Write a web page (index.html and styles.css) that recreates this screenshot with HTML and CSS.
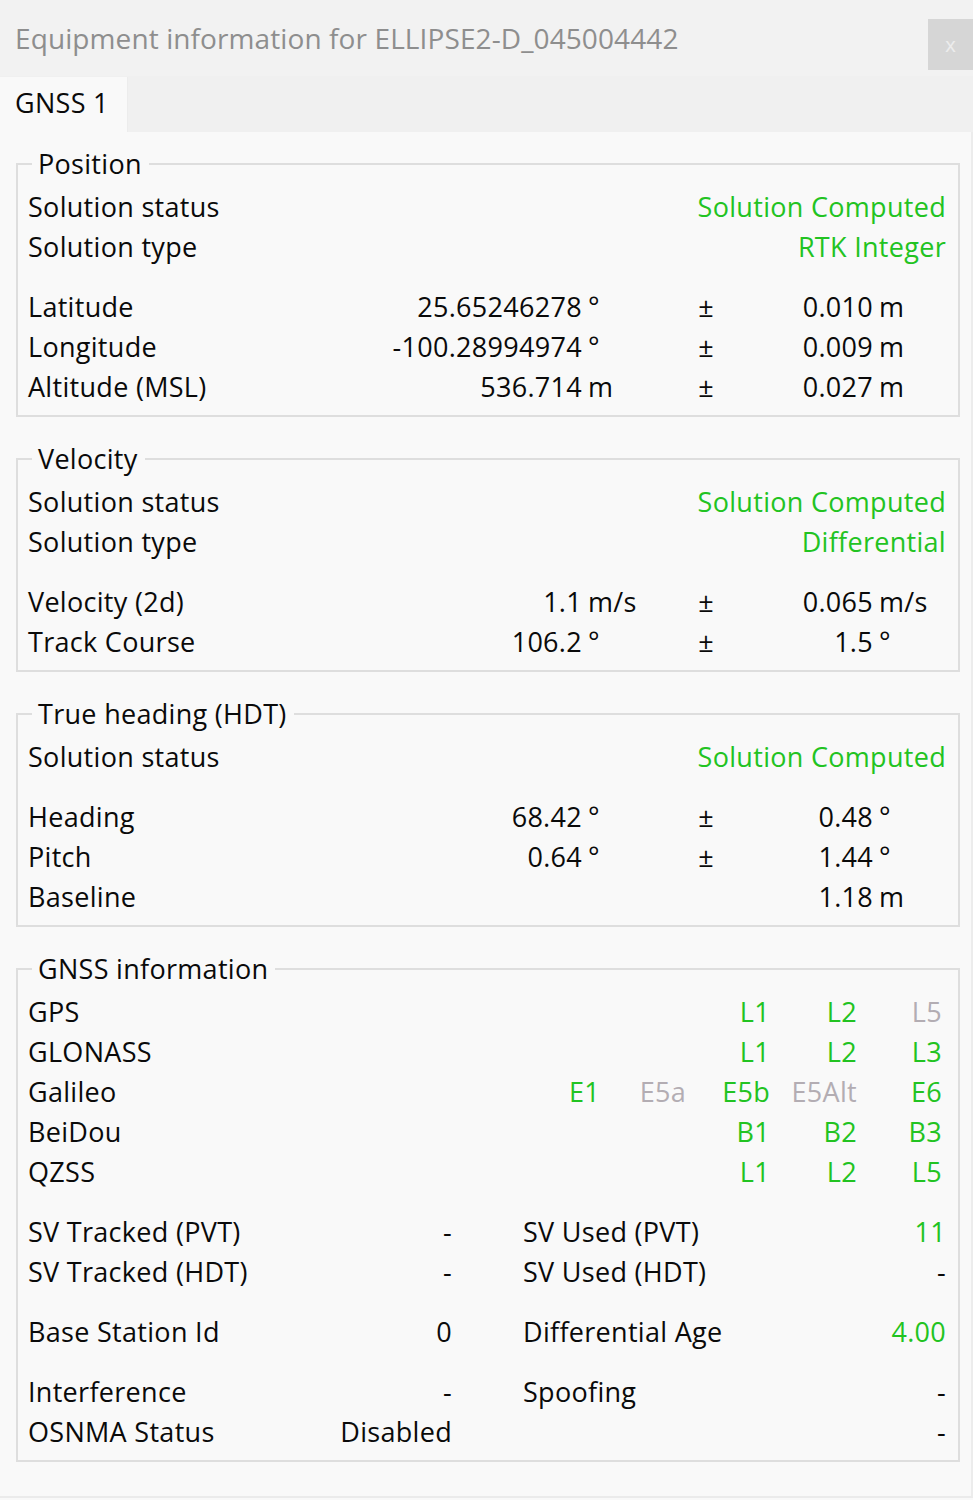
FILE: index.html
```html
<!DOCTYPE html>
<html lang="en">
<head>
<meta charset="utf-8">
<title>Equipment information</title>
<link rel="stylesheet" href="styles.css">
</head>
<body>
<div class="window">
  <header class="titlebar">
    <div class="title">Equipment information for ELLIPSE2-D_045004442</div>
    <button class="close" type="button">x</button>
  </header>
  <nav class="tabs">
    <div class="tab active">GNSS 1</div>
  </nav>
  <main class="panel">
    <fieldset class="group">
      <legend>Position</legend>
      <div class="grid meas">
        <div class="lbl">Solution status</div><div class="status ok">Solution Computed</div>
        <div class="lbl">Solution type</div><div class="status ok">RTK Integer</div>
        <div class="spacer"></div>
        <div class="lbl">Latitude</div><div class="num">25.65246278</div><div class="unit">°</div><div class="pm">±</div><div class="num">0.010</div><div class="unit">m</div>
        <div class="lbl">Longitude</div><div class="num">-100.28994974</div><div class="unit">°</div><div class="pm">±</div><div class="num">0.009</div><div class="unit">m</div>
        <div class="lbl">Altitude (MSL)</div><div class="num">536.714</div><div class="unit">m</div><div class="pm">±</div><div class="num">0.027</div><div class="unit">m</div>
      </div>
    </fieldset>

    <fieldset class="group">
      <legend>Velocity</legend>
      <div class="grid meas">
        <div class="lbl">Solution status</div><div class="status ok">Solution Computed</div>
        <div class="lbl">Solution type</div><div class="status ok">Differential</div>
        <div class="spacer"></div>
        <div class="lbl">Velocity (2d)</div><div class="num">1.1</div><div class="unit">m/s</div><div class="pm">±</div><div class="num">0.065</div><div class="unit">m/s</div>
        <div class="lbl">Track Course</div><div class="num">106.2</div><div class="unit">°</div><div class="pm">±</div><div class="num">1.5</div><div class="unit">°</div>
      </div>
    </fieldset>

    <fieldset class="group">
      <legend>True heading (HDT)</legend>
      <div class="grid meas">
        <div class="lbl">Solution status</div><div class="status ok">Solution Computed</div>
        <div class="spacer"></div>
        <div class="lbl">Heading</div><div class="num">68.42</div><div class="unit">°</div><div class="pm">±</div><div class="num">0.48</div><div class="unit">°</div>
        <div class="lbl">Pitch</div><div class="num">0.64</div><div class="unit">°</div><div class="pm">±</div><div class="num">1.44</div><div class="unit">°</div>
        <div class="lbl">Baseline</div><div></div><div></div><div></div><div class="num">1.18</div><div class="unit">m</div>
      </div>
    </fieldset>

    <fieldset class="group">
      <legend>GNSS information</legend>
      <div class="grid signals">
        <div class="lbl">GPS</div><div></div><div></div><div class="sig ok">L1</div><div class="sig ok">L2</div><div class="sig off">L5</div>
        <div class="lbl">GLONASS</div><div></div><div></div><div class="sig ok">L1</div><div class="sig ok">L2</div><div class="sig ok">L3</div>
        <div class="lbl">Galileo</div><div class="sig ok">E1</div><div class="sig off">E5a</div><div class="sig ok">E5b</div><div class="sig off">E5Alt</div><div class="sig ok">E6</div>
        <div class="lbl">BeiDou</div><div></div><div></div><div class="sig ok">B1</div><div class="sig ok">B2</div><div class="sig ok">B3</div>
        <div class="lbl">QZSS</div><div></div><div></div><div class="sig ok">L1</div><div class="sig ok">L2</div><div class="sig ok">L5</div>
      </div>
      <div class="grid stats">
        <div class="lbl">SV Tracked (PVT)</div><div class="val">-</div><div></div><div class="lbl">SV Used (PVT)</div><div class="val ok">11</div>
        <div class="lbl">SV Tracked (HDT)</div><div class="val">-</div><div></div><div class="lbl">SV Used (HDT)</div><div class="val">-</div>
        <div class="spacer"></div>
        <div class="lbl">Base Station Id</div><div class="val">0</div><div></div><div class="lbl">Differential Age</div><div class="val ok">4.00</div>
        <div class="spacer"></div>
        <div class="lbl">Interference</div><div class="val">-</div><div></div><div class="lbl">Spoofing</div><div class="val">-</div>
        <div class="lbl">OSNMA Status</div><div class="val">Disabled</div><div></div><div class="lbl"></div><div class="val">-</div>
      </div>
    </fieldset>
  </main>
</div>
</body>
</html>
```

FILE: styles.css
```css
* { box-sizing: border-box; }

html, body {
  margin: 0;
  padding: 0;
  background: #f9f9f9;
}

body {
  font-family: "Open Sans", "Noto Sans", sans-serif;
  font-size: 27px;
  letter-spacing: 0.3px;
  color: #0a0a0a;
  width: 973px;
  height: 1500px;
  overflow: hidden;
}

.window {
  display: flex;
  flex-direction: column;
  height: 1500px;
}

.titlebar {
  flex: 0 0 76px;
  background: #f2f2f2;
  display: flex;
  align-items: flex-start;
  justify-content: space-between;
}

.title {
  padding: 16px 0 0 15px;
  font-size: 28px;
  line-height: 44px;
  color: #8e8e8e;
  letter-spacing: 0.1px;
}

.close {
  margin-top: 19px;
  width: 45px;
  height: 51px;
  border: 0;
  padding: 0;
  background: #d6d6d6;
  color: #ececec;
  font-family: "Liberation Sans", sans-serif;
  font-size: 21px;
  line-height: 51px;
}

.tabs {
  flex: 0 0 56px;
  background: #f0f0f0;
  display: flex;
  align-items: flex-end;
}

.tab {
  width: 128px;
  height: 55px;
  background: #f9f9f9;
  padding-left: 15px;
  line-height: 52px;
  border-right: 1px solid #ececec;
}

.panel {
  flex: 1 1 auto;
  background: #f9f9f9;
  border-right: 2px solid #ececec;
  border-bottom: 2px solid #ebebeb;
  width: 973px;
  padding-top: 12px;
  margin-bottom: 2px;
}

.group {
  margin: 0 0 22px 16px;
  width: 944px;
  min-width: 0;
  border: 2px solid #dedede;
  padding: 0 12px 8px 10px;
}

.group legend {
  margin-left: 4px;
  padding: 0 7px 0 6px;
  line-height: 40px;
}

.grid {
  display: grid;
  line-height: 40px;
  margin-top: 3px;
  white-space: nowrap;
}

.meas {
  grid-template-columns: 272px 282px 98px 52px 141px 73px;
}

.meas .unit { padding-left: 6px; }
.meas .num { text-align: right; }
.pm { text-align: center; }

.status {
  grid-column: 2 / -1;
  text-align: right;
}

.spacer {
  grid-column: 1 / -1;
  height: 20px;
}

.signals {
  grid-template-columns: 486px 86px 86px 84px 87px 85px;
}

.sig { text-align: right; }

.stats {
  grid-template-columns: 296px 128px 71px 327px 96px;
  margin-top: 20px;
}

.stats .val { text-align: right; }

.ok { color: #22c322; }
.off { color: #b3adb3; }
```
